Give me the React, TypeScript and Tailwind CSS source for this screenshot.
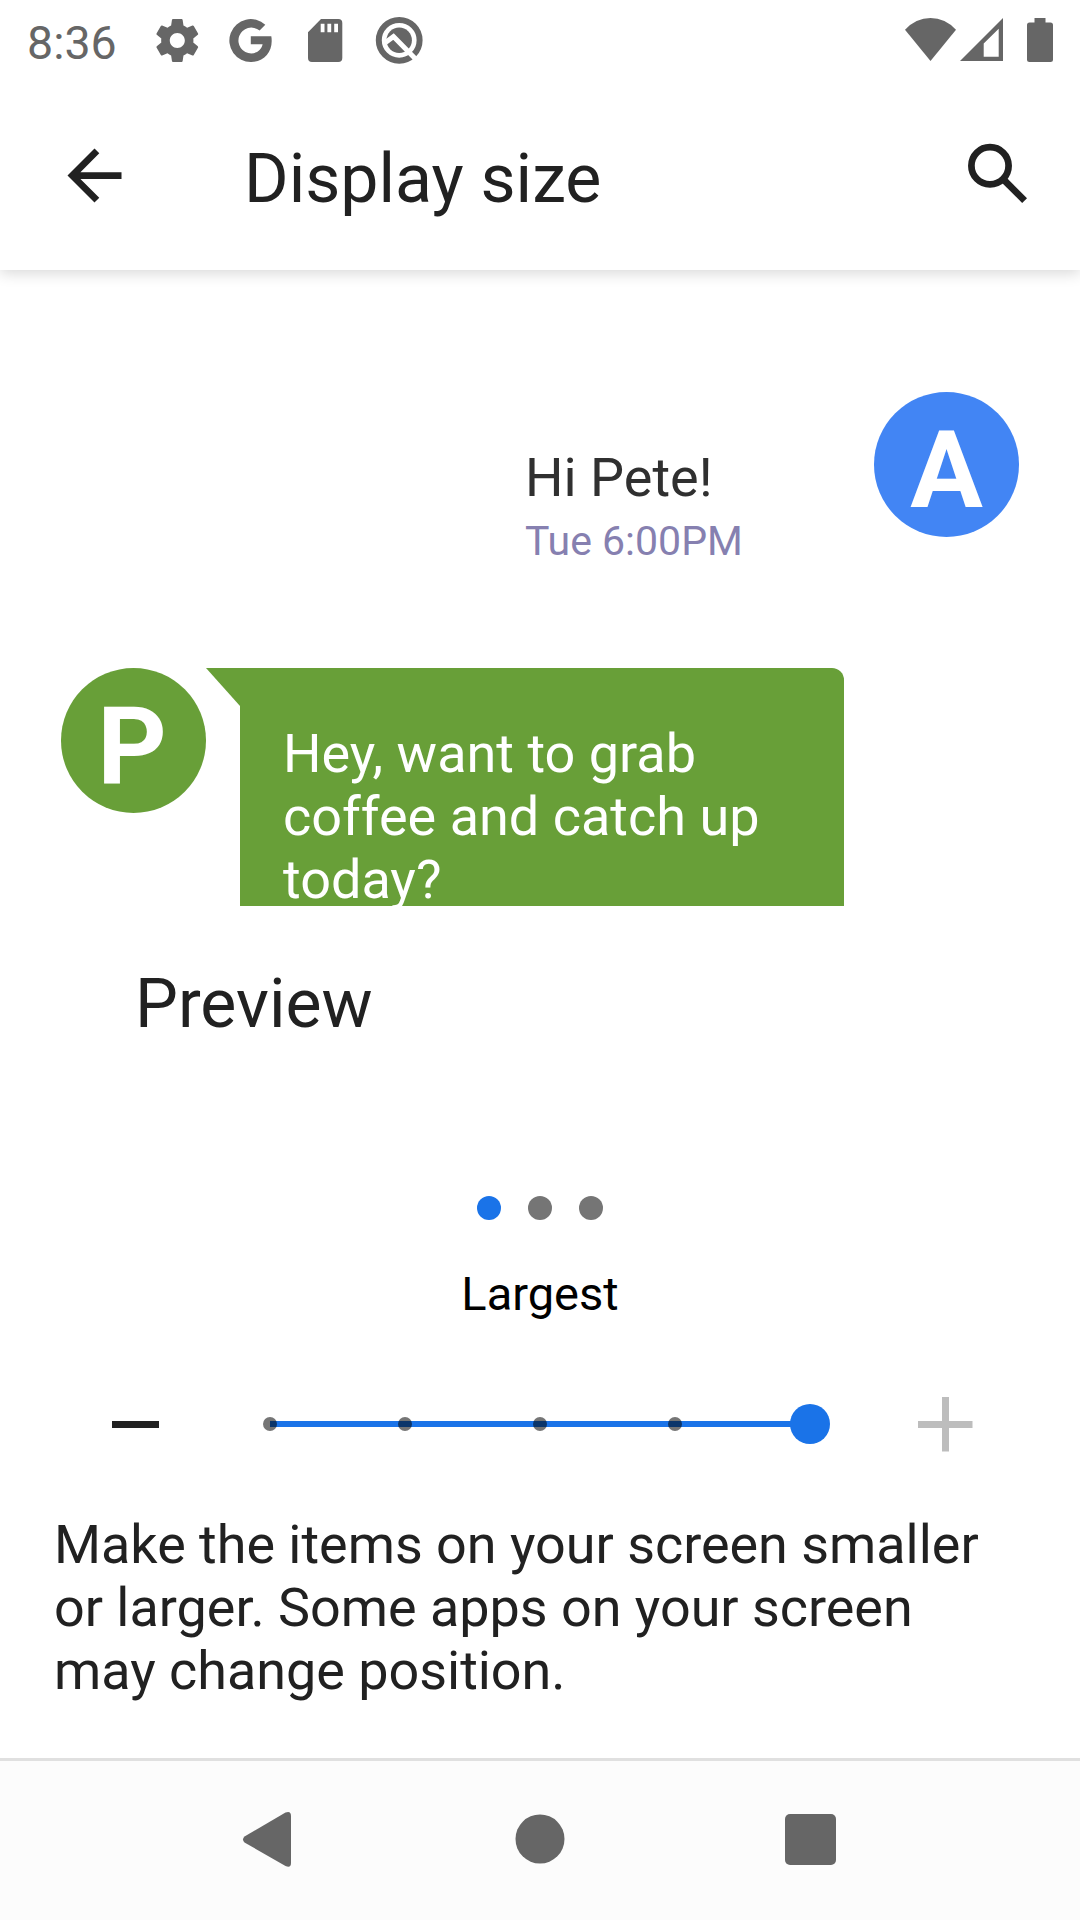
import React from "react";

function StatusIcons() {
  return (
    <svg className="ml-[36px] h-[81px] w-[280px]" viewBox="150 0 280 81" fill="#666666">
      <path
        transform="translate(151.5 14.7) scale(2.15)"
        d="M19.43 12.98c.04-.32.07-.64.07-.98s-.03-.66-.07-.98l2.11-1.65c.19-.15.24-.42.12-.64l-2-3.46c-.12-.22-.39-.3-.61-.22l-2.49 1c-.52-.4-1.08-.73-1.69-.98l-.38-2.65C14.46 2.18 14.25 2 14 2h-4c-.25 0-.46.18-.49.42l-.38 2.65c-.61.25-1.17.59-1.69.98l-2.49-1c-.23-.09-.49 0-.61.22l-2 3.46c-.13.22-.07.49.12.64l2.11 1.65c-.04.32-.07.65-.07.98s.03.66.07.98l-2.11 1.65c-.19.15-.24.42-.12.64l2 3.46c.12.22.39.3.61.22l2.49-1c.52.4 1.08.73 1.69.98l.38 2.65c.03.24.24.42.49.42h4c.25 0 .46-.18.49-.42l.38-2.65c.61-.25 1.17-.59 1.69-.98l2.49 1c.23.09.49 0 .61-.22l2-3.46c.12-.22.07-.49-.12-.64l-2.11-1.65zM12 15.5c-1.93 0-3.5-1.57-3.5-3.5s1.57-3.5 3.5-3.5 3.5 1.57 3.5 3.5-1.57 3.5-3.5 3.5z"
      />
      <path d="M271.3 36.3H250.8V44.3H262.6C261.4 49.7 257 53.4 251.3 53.4A12.9 12.9 0 1 1 259.6 30.6L265.3 24.8A21.4 21.4 0 1 0 251.3 61.9C263.5 61.9 271.7 53 271.7 41C271.7 39.3 271.6 37.8 271.3 36.3Z" />
      <path
        fillRule="evenodd"
        d="M321 19H338.300Q342.300 19 342.300 23V58Q342.300 62 338.300 62H312Q308 62 308 58V32.300ZM320.700 23.700V32.300H324.500V23.700ZM327.400 23.700V32.300H331.200V23.700ZM334.200 23.700V32.300H338V23.700Z"
      />
      <circle cx="399.200" cy="40.300" r="20.400" fill="none" stroke="#666666" strokeWidth="6" />
      <circle cx="399.200" cy="40.300" r="12.700" />
      <path d="M385.500 42.500L393.500 36.500L418 61.500" fill="none" stroke="#ffffff" strokeWidth="5" />
    </svg>
  );
}

function SystemIcons() {
  return (
    <svg className="ml-auto h-[81px] w-[180px]" viewBox="900 0 180 81" fill="#666666">
      <path d="M930.500 61L905 29.700Q916 18 930.500 18T956 29.700Z" />
      <path fillRule="evenodd" d="M960 61L1003 18V61ZM983.700 43.500V56.700H998.700V28.700Z" />
      <path d="M1034.500 18H1045.500V22.500H1050.500Q1053 22.500 1053 25V59.500Q1053 62 1050.500 62H1029.500Q1027 62 1027 59.500V25Q1027 22.500 1029.500 22.500H1034.500Z" />
    </svg>
  );
}

function Avatar({ letter, color }: { letter: string; color: string }) {
  return (
    <div className={`flex h-[145px] w-[145px] shrink-0 justify-center rounded-full pt-[15px] text-[108px] leading-[126px] font-bold text-white ${color}`}>
      {letter}
    </div>
  );
}

const ticks = [0, 1, 2, 3];

export default function App() {
  return (
    <div className="flex h-[1920px] w-[1080px] flex-col overflow-hidden bg-white font-[Roboto,sans-serif] text-[#212121]">
      <header className="relative h-[270px] shrink-0 bg-white shadow-[0_3px_14px_rgba(0,0,0,0.16)]">
        <div className="flex h-[81px]">
          <span className="ml-[27px] w-[87px] pt-[15px] text-[46.500px] leading-[56px] text-[#666666]">8:36</span>
          <StatusIcons />
          <SystemIcons />
        </div>
        <div className="flex h-[189px]">
          <svg className="mt-[54px] ml-[54px] h-[81px] w-[81px]" viewBox="0 0 24 24" fill="#212121">
            <path d="M20 11H7.830l5.590-5.590L12 4l-8 8 8 8 1.410-1.410L7.830 13H20v-2z" />
          </svg>
          <h1 className="ml-[109px] pt-[58px] text-[68px] leading-[80px]">Display size</h1>
          <svg className="mt-[54px] mr-[41px] ml-auto h-[81px] w-[81px]" viewBox="958 135 81 81" fill="none" stroke="#212121" strokeWidth="6.750">
            <circle cx="990" cy="165.800" r="18.600" />
            <path d="M1003 179L1024.600 200.600" />
          </svg>
        </div>
      </header>

      <section className="h-[636px] shrink-0 overflow-hidden">
        <div className="flex h-[276px] pt-[122px] pl-[525px]">
          <div className="w-[349px] pt-[54px]">
            <p className="text-[54px] leading-[63px] text-[#303030]">Hi Pete!</p>
            <p className="mt-[8px] text-[41px] leading-[48px] text-[#8680b0]">Tue 6:00PM</p>
          </div>
          <Avatar letter="A" color="bg-[#4285f4]" />
        </div>
        <div className="mt-[122px] flex pl-[61px]">
          <Avatar letter="P" color="bg-[#689f38] pr-[3px]" />
          <svg className="h-[38px] w-[34px] shrink-0" viewBox="0 0 34 38" fill="#689f38">
            <path d="M0 0H34V38Z" />
          </svg>
          <div className="h-[300px] w-[604px] rounded-tr-[12px] bg-[#689f38] pt-[54px] pl-[43px] text-[54px] leading-[63px] text-white">
            Hey, want to grab
            <br />
            coffee and catch up
            <br />
            today?
          </div>
        </div>
      </section>

      <h2 className="mt-[58px] ml-[135px] text-[68px] leading-[80px]">Preview</h2>

      <div className="mt-[152px] flex justify-center gap-[27px]">
        <span className="h-[24px] w-[24px] rounded-full bg-[#1a73e8]" />
        <span className="h-[24px] w-[24px] rounded-full bg-[#757575]" />
        <span className="h-[24px] w-[24px] rounded-full bg-[#757575]" />
      </div>

      <p className="mt-[46px] text-center text-[47px] leading-[56px] text-black">Largest</p>

      <div className="mt-[72px] flex h-[60px] items-center">
        <span className="mt-[1px] ml-[112px] h-[7px] w-[47px] bg-[#212121]" />
        <div className="relative ml-[104px] flex h-[40px] w-[567px] items-center justify-between">
          <div className="absolute top-[17px] left-[7px] h-[6px] w-[540px] bg-[#1a73e8]" />
          <div className="relative flex gap-[121px]">
            {ticks.map((t) => (
              <span key={t} className="h-[14px] w-[14px] rounded-full bg-black/54" />
            ))}
          </div>
          <span className="relative h-[40px] w-[40px] rounded-full bg-[#1a73e8]" />
        </div>
        <svg className="mt-[1px] ml-[88px] h-[55px] w-[55px]" viewBox="0 0 55 55" fill="#bdbdbd">
          <path d="M24 0H31V24H54.500V31H31V54.500H24V31H0V24H24Z" />
        </svg>
      </div>

      <p className="mt-[59px] ml-[54px] text-[53.900px] leading-[63px]">
        Make the items on your screen smaller
        <br />
        or larger. Some apps on your screen
        <br />
        may change position.
      </p>

      <nav className="mt-auto flex h-[162px] shrink-0 border-t-[3px] border-[#e0e0e0] bg-[#fcfcfc]">
        <svg className="h-[159px] w-[1080px]" viewBox="0 1761 1080 159" fill="#666666">
          <path d="M244.500 1836.500L285.500 1812.600Q291 1810.500 291 1816V1863Q291 1868.500 285.500 1866L244.500 1842.500Q241.500 1839.500 244.500 1836.500Z" />
          <circle cx="540" cy="1839" r="24.500" />
          <rect x="785" y="1814" width="51" height="51" rx="5" />
        </svg>
      </nav>
    </div>
  );
}
